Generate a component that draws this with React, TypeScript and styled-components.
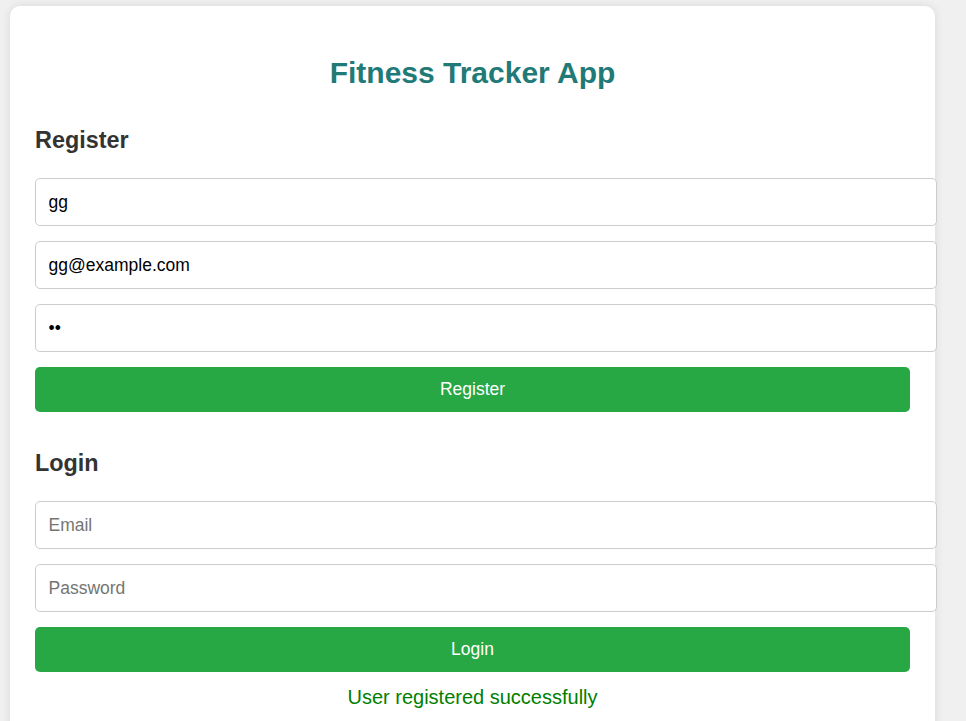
import React from "react";
import styled, { createGlobalStyle } from "styled-components";

const GlobalStyle = createGlobalStyle`
  html, body {
    margin: 0;
    padding: 0;
    background: #f0f0f0;
    font-family: "Liberation Sans", Arial, sans-serif;
  }
  body {
    padding: 6px 0 0 10px;
  }
`;

const Card = styled.div`
  width: 925px;
  box-sizing: border-box;
  padding: 25px;
  background: #ffffff;
  border-radius: 10px;
  box-shadow: 0 0 10px rgba(0, 0, 0, 0.1);
`;

const Title = styled.h1`
  margin: 24px 0 0;
  font-size: 30px;
  line-height: 36px;
  font-weight: bold;
  text-align: center;
  color: #1f7a78;
`;

const SectionTitle = styled.h2<{ $top: number }>`
  margin: ${(p) => p.$top}px 0 24px;
  font-size: 23.4px;
  line-height: 28px;
  font-weight: bold;
  color: #333333;
`;

const Field = styled.input`
  display: block;
  width: 100%;
  box-sizing: content-box;
  height: 46px;
  padding: 0 12.5px;
  margin: 0 0 15px;
  border: 1px solid #cccccc;
  border-radius: 5px;
  font-family: "Liberation Sans", Arial, sans-serif;
  font-size: 17.5px;
  color: #000;
  background: #fff;
  outline: none;
  &::placeholder {
    color: #757575;
  }
`;

const Button = styled.button`
  display: block;
  width: 100%;
  height: 45px;
  border: none;
  border-radius: 5px;
  background: #28a745;
  color: #ffffff;
  font-family: "Liberation Sans", Arial, sans-serif;
  font-size: 17.5px;
  cursor: pointer;
`;

const Message = styled.p`
  margin: 14px 0 0;
  font-size: 20px;
  line-height: 23px;
  text-align: center;
  color: #008000;
`;

export default function App() {
  return (
    <>
      <GlobalStyle />
      <Card>
        <Title>Fitness Tracker App</Title>
        <SectionTitle $top={35}>Register</SectionTitle>
        <Field type="text" placeholder="Username" defaultValue="gg" />
        <Field type="email" placeholder="Email" defaultValue="gg@example.com" />
        <Field type="password" placeholder="Password" defaultValue="gg" />
        <Button>Register</Button>
        <SectionTitle $top={37}>Login</SectionTitle>
        <Field type="email" placeholder="Email" />
        <Field type="password" placeholder="Password" />
        <Button>Login</Button>
        <Message>User registered successfully</Message>
      </Card>
    </>
  );
}
